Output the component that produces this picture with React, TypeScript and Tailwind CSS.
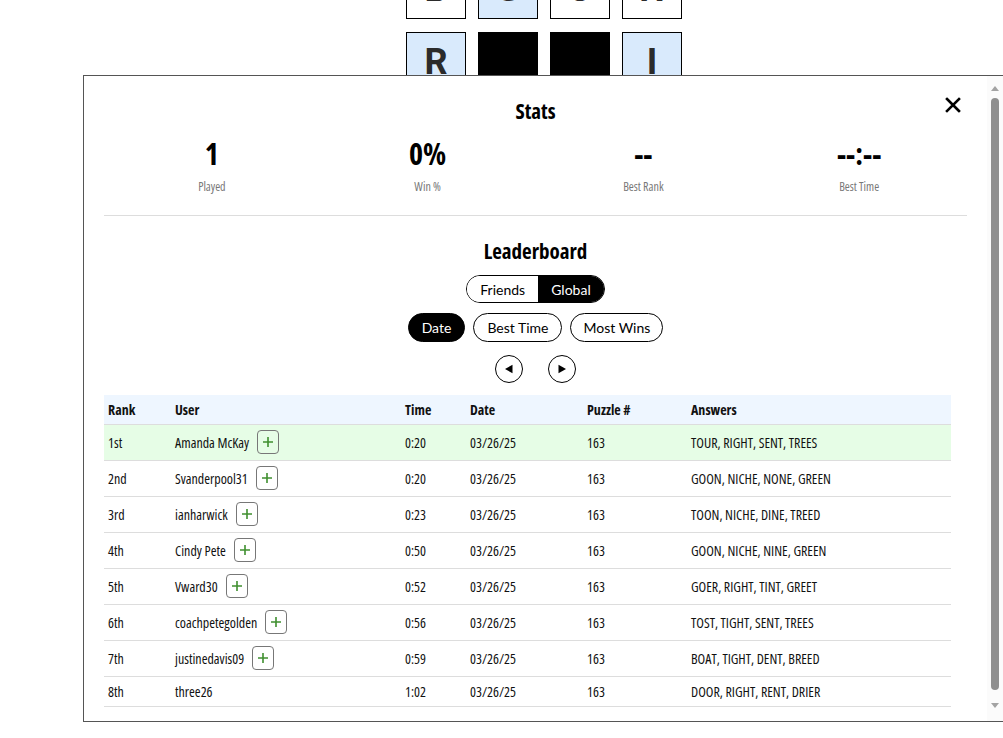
import React from "react";

const NARROW = "font-['Open_Sans',sans-serif] [font-stretch:75%]";
const GEO = "font-['Lato','Noto_Sans',sans-serif]";

const rows = [
  { rank: "1st", user: "Amanda McKay", add: true, time: "0:20", answers: "TOUR, RIGHT, SENT, TREES", me: true },
  { rank: "2nd", user: "Svanderpool31", add: true, time: "0:20", answers: "GOON, NICHE, NONE, GREEN" },
  { rank: "3rd", user: "ianharwick", add: true, time: "0:23", answers: "TOON, NICHE, DINE, TREED" },
  { rank: "4th", user: "Cindy Pete", add: true, time: "0:50", answers: "GOON, NICHE, NINE, GREEN" },
  { rank: "5th", user: "Vward30", add: true, time: "0:52", answers: "GOER, RIGHT, TINT, GREET" },
  { rank: "6th", user: "coachpetegolden", add: true, time: "0:56", answers: "TOST, TIGHT, SENT, TREES" },
  { rank: "7th", user: "justinedavis09", add: true, time: "0:59", answers: "BOAT, TIGHT, DENT, BREED" },
  { rank: "8th", user: "three26", add: false, time: "1:02", answers: "DOOR, RIGHT, RENT, DRIER" },
];

function Tile({ letter, kind }: { letter?: string; kind: "white" | "blue" | "black" }) {
  const cls =
    kind === "black"
      ? "bg-black border-black"
      : kind === "blue"
      ? "bg-[#d9eafc] border-black"
      : "bg-white border-black";
  return (
    <div
      className={`w-[60px] h-[60px] border flex items-center justify-center text-[36px] leading-none font-bold text-[#2b2b2b] font-['Roboto','Noto_Sans',sans-serif] ${cls}`}
    >
      {letter}
    </div>
  );
}

function Stat({ value, label }: { value: string; label: string }) {
  return (
    <div className="flex flex-col items-center">
      <div className={`text-[30px] leading-[34px] font-bold text-black ${NARROW}`}>{value}</div>
      <div className={`mt-[8px] text-[12px] leading-[16px] text-[#777] ${NARROW}`}>{label}</div>
    </div>
  );
}

function Scrollbar() {
  return (
    <div className="w-[16px] shrink-0 bg-[#fbfbfb] flex flex-col items-center">
      <div className="h-[20px] flex items-end justify-center pb-[5px]">
        <svg width="8" height="5" viewBox="0 0 8 5">
          <path d="M4 0 L8 5 L0 5 Z" fill="#a3a3a3" />
        </svg>
      </div>
      <div className="mt-[2px] w-[8px] h-[592px] rounded-full bg-[#8f8f8f]" />
      <div className="flex-1 flex items-center justify-center">
        <svg width="8" height="5" viewBox="0 0 8 5">
          <path d="M0 0 L8 0 L4 5 Z" fill="#a3a3a3" />
        </svg>
      </div>
    </div>
  );
}

export default function App() {
  return (
    <div className="relative w-[1003px] h-[738px] bg-white overflow-hidden">
      {/* background board */}
      <div className="flex flex-col items-center gap-[13px] mt-[-41px] ml-[85px]">
        <div className="flex gap-[12px]">
          <Tile letter="B" kind="white" />
          <Tile letter="S" kind="blue" />
          <Tile letter="O" kind="white" />
          <Tile letter="N" kind="white" />
        </div>
        <div className="flex gap-[12px]">
          <Tile letter="R" kind="blue" />
          <Tile kind="black" />
          <Tile kind="black" />
          <Tile letter="I" kind="blue" />
        </div>
      </div>

      {/* modal */}
      <div className="absolute left-[83px] top-[75px] right-0 h-[647px] bg-white border-l border-t border-b border-[#555] flex overflow-hidden">
        <div className="relative flex-1 min-w-0 px-[20px] pt-[20px] pb-[24px]">
          <button className="absolute right-[25px] top-[20px] w-[18px] h-[18px] flex items-center justify-center">
            <svg width="16" height="16" viewBox="0 0 16 16">
              <path d="M2 2 L14 14 M14 2 L2 14" stroke="black" strokeWidth="2.6" strokeLinecap="square" />
            </svg>
          </button>
          <div className={`text-center text-[21px] leading-[30px] font-bold text-black ${NARROW}`}>Stats</div>
          <div className="grid grid-cols-4 mt-[11px]">
            <Stat value="1" label="Played" />
            <Stat value="0%" label="Win %" />
            <Stat value="--" label="Best Rank" />
            <Stat value="--:--" label="Best Time" />
          </div>
          <div className="mt-[20px] h-px bg-[#dddddd]" />

          <div className={`mt-[21px] text-center text-[21px] leading-[28px] font-bold text-black ${NARROW}`}>
            Leaderboard
          </div>
          <div className="mt-[10px] flex justify-center">
            <div className={`flex h-[28px] rounded-full border border-black overflow-hidden ${GEO}`}>
              <div className="px-[13px] flex items-center text-[14px] text-black bg-white">Friends</div>
              <div className="px-[13px] flex items-center text-[14px] text-white bg-black">Global</div>
            </div>
          </div>
          <div className={`mt-[10px] flex justify-center gap-[8px] ${GEO}`}>
            <div className="h-[29px] px-[13px] rounded-full border border-black bg-black text-white text-[14px] flex items-center">
              Date
            </div>
            <div className="h-[29px] px-[13px] rounded-full border border-black bg-white text-black text-[14px] flex items-center">
              Best Time
            </div>
            <div className="h-[29px] px-[12px] rounded-full border border-black bg-white text-black text-[14px] flex items-center">
              Most Wins
            </div>
          </div>
          <div className="mt-[13px] flex justify-center gap-[25px]">
            <div className="w-[28px] h-[28px] rounded-full border border-black flex items-center justify-center">
              <svg width="10" height="10" viewBox="0 0 10 10">
                <path d="M1 5 L8.5 0.8 L8.5 9.2 Z" fill="black" />
              </svg>
            </div>
            <div className="w-[28px] h-[28px] rounded-full border border-black flex items-center justify-center">
              <svg width="10" height="10" viewBox="0 0 10 10">
                <path d="M9 5 L1.5 0.8 L1.5 9.2 Z" fill="black" />
              </svg>
            </div>
          </div>

          <table className={`mt-[12px] w-[847px] border-collapse text-[14px] font-medium text-[#111] ${NARROW}`}>
            <thead>
              <tr className="bg-[#eef6ff] h-[29px] text-left">
                <th className="w-[67px] pl-[4px] font-bold border-b border-[#dddddd]">Rank</th>
                <th className="w-[230px] pl-[4px] font-bold border-b border-[#dddddd]">User</th>
                <th className="w-[65px] pl-[4px] font-bold border-b border-[#dddddd]">Time</th>
                <th className="w-[117px] pl-[4px] font-bold border-b border-[#dddddd]">Date</th>
                <th className="w-[104px] pl-[4px] font-bold border-b border-[#dddddd]">Puzzle #</th>
                <th className="pl-[4px] font-bold border-b border-[#dddddd]">Answers</th>
              </tr>
            </thead>
            <tbody>
              {rows.map((r) => (
                <tr
                  key={r.rank}
                  className={`${r.me ? "bg-[#e6fde6]" : "bg-white"} ${r.add ? "h-[36px]" : "h-[30px]"}`}
                >
                  <td className="pl-[4px] border-b border-[#dddddd]">{r.rank}</td>
                  <td className="pl-[4px] border-b border-[#dddddd]">
                    <div className="flex items-center gap-[8px]">
                      <span>{r.user}</span>
                      {r.add && (
                        <span className="w-[22px] h-[24px] rounded-[4px] border border-[#777] flex items-center justify-center">
                          <svg width="12" height="12" viewBox="0 0 12 12">
                            <path d="M6 1 V11 M1 6 H11" stroke="#3f8f2f" strokeWidth="1.6" />
                          </svg>
                        </span>
                      )}
                    </div>
                  </td>
                  <td className="pl-[4px] border-b border-[#dddddd]">{r.time}</td>
                  <td className="pl-[4px] border-b border-[#dddddd]">03/26/25</td>
                  <td className="pl-[4px] border-b border-[#dddddd]">163</td>
                  <td className="pl-[4px] border-b border-[#dddddd]">{r.answers}</td>
                </tr>
              ))}
            </tbody>
          </table>
        </div>
        <Scrollbar />
      </div>
    </div>
  );
}
